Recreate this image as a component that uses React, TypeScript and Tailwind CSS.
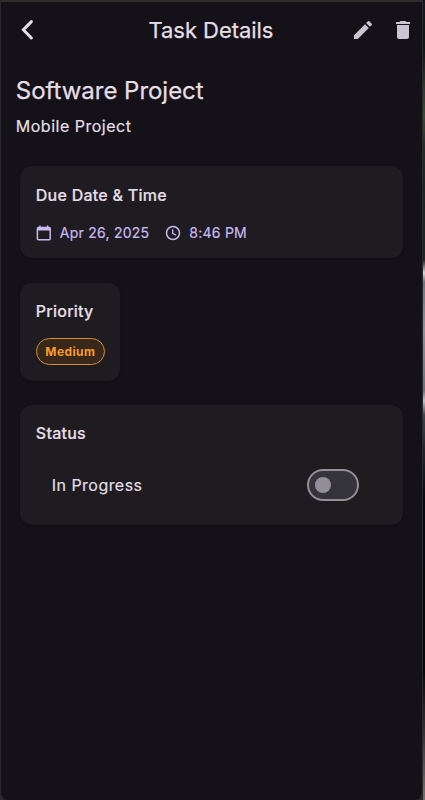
import React from "react";
import { MdDelete, MdEdit } from "react-icons/md";

function Card({ title, className, children }: { title: string; className: string; children: React.ReactNode }) {
  return (
    <section className={`rounded-xl bg-[#1e1c21] px-4 shadow-[0_1px_2px_rgba(0,0,0,0.35)] ${className}`}>
      <h2 className="pt-[17.5px] text-[16px] leading-[22px] font-medium tracking-[0.25px] whitespace-nowrap [-webkit-text-stroke:0.2px]">{title}</h2>
      {children}
    </section>
  );
}

function CalendarIcon() {
  return (
    <svg viewBox="0 0 16 16" className="h-4 w-4" fill="none" stroke="currentColor" strokeWidth="1.5">
      <rect x="1.4" y="2.4" width="12.8" height="12.4" rx="1" />
      <path d="M1.4 4.2h12.8" strokeWidth="2.6" />
      <path d="M4 0.6v2.4M11.6 0.6v2.4" />
    </svg>
  );
}

function ClockIcon() {
  return (
    <svg viewBox="0 0 16 16" className="ml-[7.5px] h-4 w-4" fill="none" stroke="currentColor" strokeWidth="1.5">
      <circle cx="8" cy="8" r="6.5" />
      <path d="M7.7 4.2v4.1l3.3 2" strokeWidth="1.3" />
    </svg>
  );
}

export default function App() {
  return (
    <div className="flex h-[800px] w-[425px] overflow-hidden bg-[#29282c] font-['Inter','Liberation_Sans',sans-serif] text-[#e4dfe6]">
      <main className="flex w-[423px] shrink-0 flex-col rounded-b-lg border-t-2 border-r border-l border-t-[#2d2c2f] border-r-[#2b2b30] border-l-[#29282c] bg-[#141218]">
        <header className="flex h-14 items-center">
          <button aria-label="Back" className="ml-[14px] h-6 w-6">
            <svg viewBox="0 0 24 24" className="h-6 w-6" fill="none" stroke="currentColor" strokeWidth="3" strokeLinecap="round" strokeLinejoin="miter">
              <path d="M16.4 3.6 8.4 11.8l8 8.2" />
            </svg>
          </button>
          <h1 className="ml-[109.5px] w-[126px] text-[22px] leading-7 tracking-[-0.05px] whitespace-nowrap [-webkit-text-stroke:0.25px]">Task Details</h1>
          <button aria-label="Edit" className="ml-[76px] text-[#cac4d0]"><MdEdit size={24} /></button>
          <button aria-label="Delete" className="ml-4 text-[#cac4d0]"><MdDelete size={24} /></button>
        </header>

        <div className="flex flex-col items-start pt-[17px] pl-[14.8px]">
          <h2 className="text-[24px] leading-8 tracking-[-0.03px] whitespace-nowrap [-webkit-text-stroke:0.25px]">Software Project</h2>
          <p className="mt-[8px] text-[16px] leading-[22px] tracking-[0.5px] whitespace-nowrap [-webkit-text-stroke:0.2px]">Mobile Project</p>

          <Card title="Due Date & Time" className="mt-[29px] ml-1 h-[92px] w-[383.2px]">
            <div className="mt-[17px] flex h-5 items-center text-[14px] leading-5 tracking-[0.25px] whitespace-nowrap text-[#c9b8f0] [-webkit-text-stroke:0.2px]">
              <CalendarIcon />
              <span className="ml-2 w-[98px]">Apr 26, 2025</span>
              <ClockIcon />
              <span className="ml-2">8:46 PM</span>
            </div>
          </Card>

          <Card title="Priority" className="mt-[24.5px] ml-1 h-[98px] w-[100.5px]">
            <span className="mt-[16px] flex h-[27px] w-[69px] items-center justify-center rounded-full border border-[#d88a32] bg-[#38281c] text-[12px] font-bold tracking-[0.4px] text-[#f99a25]">
              Medium
            </span>
          </Card>

          <Card title="Status" className="mt-[24px] ml-1 h-[120px] w-[383.2px]">
            <div className="mt-[25px] flex h-8 items-center justify-between pr-[28px] pl-4">
              <span className="text-[16px] tracking-[0.46px] whitespace-nowrap [-webkit-text-stroke:0.2px]">In Progress</span>
              <button role="switch" aria-checked="false" aria-label="In Progress" className="flex h-8 w-[52px] items-center rounded-full border-2 border-[#938f99] bg-[#36343b] pl-[6px]">
                <span className="h-4 w-4 rounded-full bg-[#938f99]" />
              </button>
            </div>
          </Card>
        </div>
      </main>
      <div className="w-[2px] shrink-0 bg-[linear-gradient(to_bottom,#111b1c_0px,#101715_50px,#263c20_85px,#355223_115px,#1c3020_150px,#172520_205px,#1b2926_260px,#d0d5d4_273px,#687778_282px,#879394_330px,#667376_390px,#bbc1c2_401px,#39484b_415px,#1c282d_450px,#08090c_500px,#07070a_670px,#332f2d_730px,#77706a_800px)]" />
    </div>
  );
}
